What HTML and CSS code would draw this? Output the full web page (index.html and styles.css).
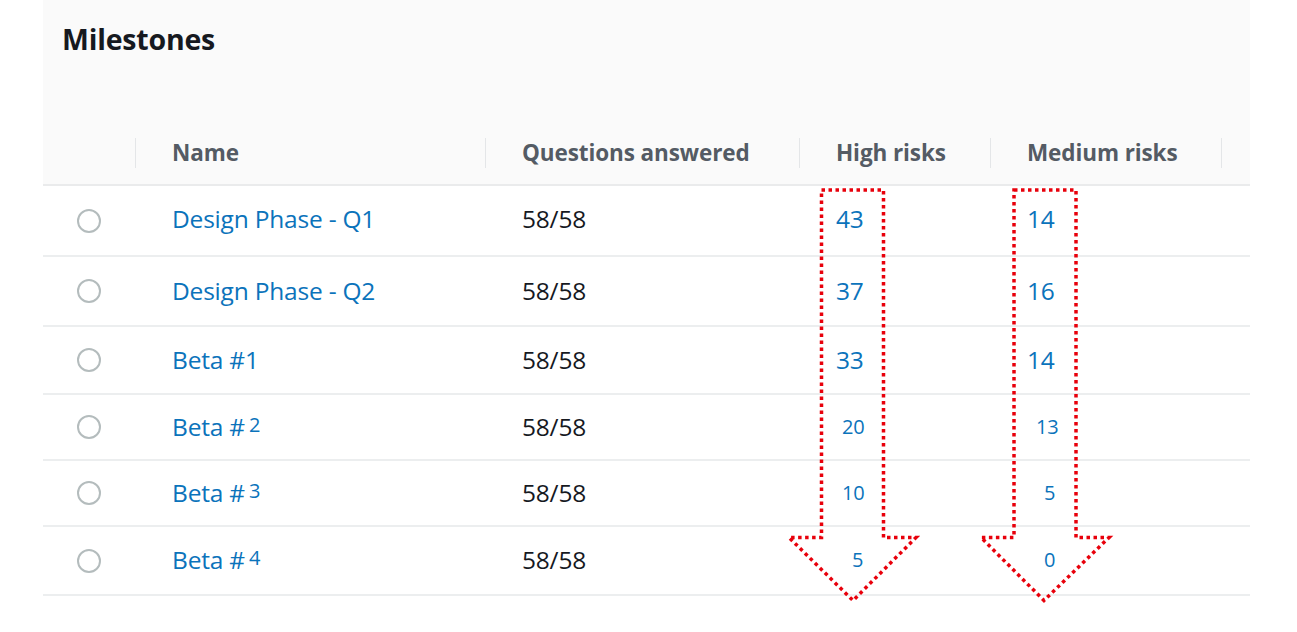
FILE: index.html
```html
<!DOCTYPE html>
<html>
<head>
<meta charset="utf-8">
<link rel="stylesheet" href="styles.css">
</head>
<body>
<div class="panel">
  <div class="panel-head">
    <h2 class="title">Milestones</h2>
  </div>
  <div class="grid head-row">
    <div class="hcell sel"><span class="div"></span></div>
    <div class="hcell">Name<span class="div"></span></div>
    <div class="hcell">Questions answered<span class="div"></span></div>
    <div class="hcell">High risks<span class="div"></span></div>
    <div class="hcell">Medium risks<span class="div"></span></div>
    <div class="hcell"></div>
  </div>
  <div class="grid row r1">
    <div class="cell sel"><span class="radio"></span></div>
    <div class="cell link">Design Phase - Q1</div>
    <div class="cell">58/58</div>
    <div class="cell link">43</div>
    <div class="cell link">14</div>
    <div class="cell"></div>
  </div>
  <div class="grid row r2">
    <div class="cell sel"><span class="radio"></span></div>
    <div class="cell link">Design Phase - Q2</div>
    <div class="cell">58/58</div>
    <div class="cell link">37</div>
    <div class="cell link">16</div>
    <div class="cell"></div>
  </div>
  <div class="grid row r3">
    <div class="cell sel"><span class="radio"></span></div>
    <div class="cell link">Beta #1</div>
    <div class="cell">58/58</div>
    <div class="cell link">33</div>
    <div class="cell link">14</div>
    <div class="cell"></div>
  </div>
  <div class="grid row r4">
    <div class="cell sel"><span class="radio"></span></div>
    <div class="cell link">Beta #<span class="sm">2</span></div>
    <div class="cell">58/58</div>
    <div class="cell link"><span class="num n-hi2">20</span></div>
    <div class="cell link"><span class="num n-me2">13</span></div>
    <div class="cell"></div>
  </div>
  <div class="grid row r5">
    <div class="cell sel"><span class="radio"></span></div>
    <div class="cell link">Beta #<span class="sm">3</span></div>
    <div class="cell">58/58</div>
    <div class="cell link"><span class="num n-hi2">10</span></div>
    <div class="cell link"><span class="num n-me1">5</span></div>
    <div class="cell"></div>
  </div>
  <div class="grid row r6">
    <div class="cell sel"><span class="radio"></span></div>
    <div class="cell link">Beta #<span class="sm">4</span></div>
    <div class="cell">58/58</div>
    <div class="cell link"><span class="num n-hi1">5</span></div>
    <div class="cell link"><span class="num n-me1">0</span></div>
    <div class="cell"></div>
  </div>
</div>
<svg class="arrows" width="1297" height="632" viewBox="0 0 1297 632">
  <polygon points="821.5,190 883.5,190 883.5,537.5 916,537.5 853,600.5 789,537.5 821.5,537.5" />
  <polygon points="1014,190 1076,190 1076,537.5 1109,537.5 1044,600.5 981,537.5 1014,537.5" />
</svg>
</body>
</html>
```
FILE: styles.css
```css
html, body {
  margin: 0;
  padding: 0;
  background: #ffffff;
}
body {
  font-family: "Open Sans", "Noto Sans", sans-serif;
  color: #16191f;
  width: 1297px;
  height: 632px;
  position: relative;
  overflow: hidden;
}
.panel {
  margin-left: 43px;
  width: 1207px;
}
.panel-head {
  background: #fafafa;
  height: 120px;
  padding: 19px 0 0 19px;
  box-sizing: border-box;
}
.title {
  margin: 0;
  font-size: 28.5px;
  font-weight: 700;
  line-height: 40px;
  color: #16191f;
  letter-spacing: -0.2px;
}
.grid {
  display: grid;
  grid-template-columns: 93px 350px 314px 191px 231px 28px;
}
.head-row {
  background: #fafafa;
  height: 66px;
  border-bottom: 2px solid #eaebec;
  box-sizing: border-box;
}
.hcell {
  position: relative;
  display: flex;
  align-items: center;
  padding-left: 36px;
  font-size: 22.5px;
  font-weight: 700;
  color: #545b64;
  letter-spacing: -0.1px;
  white-space: nowrap;
}
.hcell.sel { padding-left: 0; }
.div {
  position: absolute;
  right: 0;
  top: 18px;
  width: 1px;
  height: 30px;
  background: #e4e6e8;
}
.row {
  border-bottom: 2px solid #eceeef;
  box-sizing: border-box;
}
.r1 { height: 71px; }
.r2 { height: 70px; }
.r3 { height: 68px; }
.r4 { height: 66px; }
.r5 { height: 66px; }
.r6 { height: 69px; }
.cell {
  display: flex;
  align-items: center;
  padding-left: 36px;
  font-size: 24.5px;
  color: #16191f;
  white-space: nowrap;
  letter-spacing: -0.2px;
  padding-bottom: 2px;
}
.r1 .cell { padding-bottom: 4px; }
.cell.sel,
.r1 .cell.sel {
  padding-left: 34px;
  padding-bottom: 0;
}
.link { color: #0b73bb; }
.radio {
  width: 20px;
  height: 20px;
  border: 2px solid #b4bcbd;
  border-radius: 50%;
  background: #fff;
}
.sm {
  font-size: 20px;
  margin-left: 4px;
  position: relative;
  top: -2px;
}
.num { font-size: 20px; }
.n-hi2 { margin-left: 6px; }
.n-me2 { margin-left: 9px; }
.n-hi1 { margin-left: 16px; }
.n-me1 { margin-left: 17px; }
.arrows {
  position: absolute;
  left: 0;
  top: 0;
  pointer-events: none;
}
.arrows polygon {
  fill: none;
  stroke: #e8000b;
  stroke-width: 3.5;
  stroke-dasharray: 3.5 3.5;
}
```
